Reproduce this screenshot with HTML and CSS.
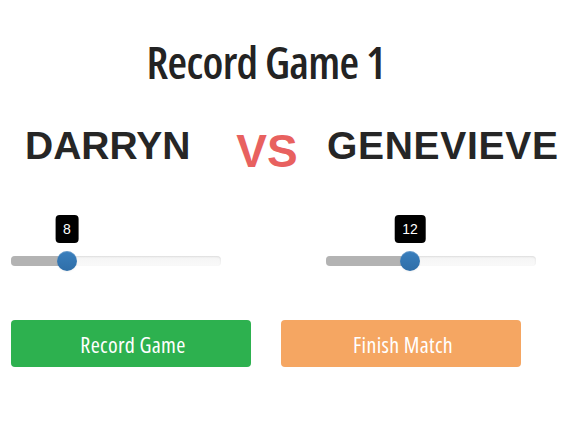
FILE: index.html
```html
<!DOCTYPE html>
<html>
<head>
<meta charset="utf-8">
<link rel="stylesheet" href="styles.css">
</head>
<body>
<div class="page">
  <h1 class="title">Record Game 1</h1>
  <div class="names">
    <div class="name name-left">DARRYN</div>
    <div class="vs">VS</div>
    <div class="name name-right">GENEVIEVE</div>
  </div>
  <div class="sliders">
    <div class="slider">
      <div class="track"><div class="fill" style="width:26.667%"></div></div>
      <div class="handle" style="left:26.667%"></div>
      <div class="tip" style="left:26.667%">8</div>
    </div>
    <div></div>
    <div class="slider">
      <div class="track"><div class="fill" style="width:40%"></div></div>
      <div class="handle" style="left:40%"></div>
      <div class="tip" style="left:40%">12</div>
    </div>
  </div>
  <div class="buttons">
    <button class="btn btn-green">Record Game</button>
    <button class="btn btn-orange">Finish Match</button>
  </div>
</div>
</body>
</html>
```
FILE: styles.css
```css
* { box-sizing: border-box; }
body {
  margin: 0;
  background: #fff;
  font-family: "Liberation Sans", Arial, sans-serif;
  color: #262626;
}
.page {
  margin-left: 11px;
  width: 525px;
}
.title {
  width: 510px;
  margin: 39px 0 0 0;
  text-align: center;
  font-family: "Open Sans", sans-serif;
  font-stretch: 75%;
  font-weight: 600;
  font-size: 45px;
  line-height: 45px;
  letter-spacing: -0.7px;
  color: #232323;
}
.names {
  display: grid;
  grid-template-columns: 210px 105px 210px;
  align-items: start;
  margin-top: 42px;
}
.name {
  font-weight: bold;
  font-size: 39px;
  line-height: 39px;
  white-space: nowrap;
  color: #262626;
}
.name-left { padding-left: 14px; }
.name-right { padding-left: 1px; letter-spacing: 0.7px; }
.vs {
  margin-top: 2px;
  text-align: center;
  padding-right: 13px;
  font-weight: bold;
  font-size: 46px;
  line-height: 46px;
  color: #e8615f;
}
.sliders {
  display: grid;
  grid-template-columns: 210px 105px 210px;
  margin-top: 77px;
}
.slider {
  position: relative;
  height: 20px;
}
.track {
  margin-top: 5px;
  height: 10px;
  border-radius: 4px;
  background: linear-gradient(#f5f5f5, #f9f9f9);
  box-shadow: inset 0 1px 2px rgba(0,0,0,0.1);
  overflow: hidden;
}
.fill {
  height: 100%;
  background: #b3b3b3;
}
.handle {
  position: absolute;
  top: 0;
  width: 20px;
  height: 20px;
  margin-left: -10px;
  border-radius: 50%;
  background: linear-gradient(#3a7fbd, #2f6ea8);
  box-shadow: inset 0 1px 0 rgba(255,255,255,0.2), 0 1px 2px rgba(0,0,0,0.05);
}
.tip {
  position: absolute;
  bottom: 28px;
  transform: translateX(-50%);
  background: #000;
  color: #fff;
  font-size: 14px;
  line-height: 28px;
  padding: 0 7.5px;
  border-radius: 4px;
}
.buttons {
  display: grid;
  grid-template-columns: 240px 240px;
  column-gap: 30px;
  margin-top: 49px;
}
.btn {
  height: 47px;
  border: none;
  border-radius: 4px;
  color: #fff;
  font-family: "Open Sans", sans-serif;
  font-stretch: 75%;
  font-weight: 500;
  font-size: 22px;
  letter-spacing: 0.3px;
  padding: 0 0 0 4px;
}
.btn-green { background: #2db14f; }
.btn-orange { background: #f5a662; }
```
